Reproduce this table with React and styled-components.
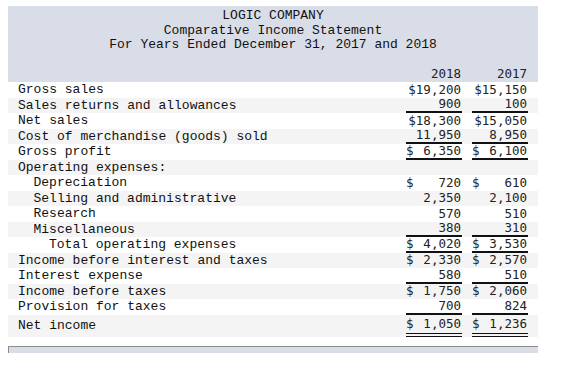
import React from "react";
import styled, { createGlobalStyle } from "styled-components";

const Global = createGlobalStyle`
  body {
    margin: 0;
    padding: 6px 0 0 8px;
    background: #ffffff;
    color: #1a1a1a;
  }
`;

const Sheet = styled.div`
  width: 530px;
  display: flex;
  flex-direction: column;
`;

const Header = styled.div`
  background: #d9dde7;
  padding-top: 3px;
  height: 76px;
  box-sizing: border-box;
  display: flex;
  flex-direction: column;
`;

const TitleLine = styled.div`
  font-family: "Liberation Mono", monospace;
  font-size: 13px;
  line-height: 14.5px;
  text-align: center;
  color: #111;
`;

const Row = styled.div`
  display: flex;
  align-items: stretch;
  height: ${(p) => p.$h || 15.5}px;
  background: ${(p) => (p.$shade ? "#f4f4f4" : "transparent")};
  padding-right: 10px;
  gap: 10px;
  box-sizing: border-box;
`;

const YearRow = styled(Row)`
  margin-top: auto;
  height: 17px;
`;

const Label = styled.div`
  flex: 1;
  font-family: "Liberation Mono", monospace;
  font-size: 13px;
  line-height: 15px;
  display: flex;
  align-items: center;
  padding-left: ${(p) => 10 + (p.$indent || 0) * 15.5}px;
  white-space: pre;
  color: #111;
`;

const Num = styled.div`
  width: 56px;
  box-sizing: border-box;
  display: flex;
  align-items: center;
  justify-content: ${(p) => (p.$dollar ? "space-between" : "flex-end")};
  padding-right: 1px;
  font-family: "DejaVu Sans Mono", monospace;
  font-size: 12.5px;
  line-height: 14px;
  color: #222;
  white-space: pre;
  border-bottom: ${(p) =>
    p.$line === "double"
      ? "4px double #111"
      : p.$line
      ? "2px solid #111"
      : "none"};
`;

const Spacer = styled.div`
  height: ${(p) => p.$h}px;
`;

const FootBar = styled.div`
  height: 6px;
  background: #d9dde7;
  border-top: 1px solid #8c8c8c;
  border-left: 1px solid #8c8c8c;
`;

const rows = [
  { label: "Gross sales", a: "$19,200", b: "$15,150" },
  { label: "Sales returns and allowances", a: "900", b: "100", line: true },
  { label: "Net sales", a: "$18,300", b: "$15,050" },
  { label: "Cost of merchandise (goods) sold", a: "11,950", b: "8,950", line: true },
  { label: "Gross profit", a: "$ 6,350", b: "$ 6,100", line: true },
  { label: "Operating expenses:", a: "", b: "" },
  { label: "Depreciation", indent: 1, a: "$ 720", b: "$ 610" },
  { label: "Selling and administrative", indent: 1, a: "2,350", b: "2,100" },
  { label: "Research", indent: 1, a: "570", b: "510" },
  { label: "Miscellaneous", indent: 1, a: "380", b: "310", line: true },
  { label: "Total operating expenses", indent: 2, a: "$ 4,020", b: "$ 3,530", line: true },
  { label: "Income before interest and taxes", a: "$ 2,330", b: "$ 2,570" },
  { label: "Interest expense", a: "580", b: "510", line: true },
  { label: "Income before taxes", a: "$ 1,750", b: "$ 2,060" },
  { label: "Provision for taxes", a: "700", b: "824", line: true },
  { label: "Net income", a: "$ 1,050", b: "$ 1,236", line: "double", h: 22 },
];

function Amount({ value, line }) {
  if (value.startsWith("$ ")) {
    return (
      <Num $dollar $line={line}>
        <span>$</span>
        <span>{value.slice(1).trim()}</span>
      </Num>
    );
  }
  return <Num $line={line}>{value}</Num>;
}

export default function App() {
  return (
    <>
      <Global />
      <Sheet>
        <Header>
          <TitleLine>LOGIC COMPANY</TitleLine>
          <TitleLine>Comparative Income Statement</TitleLine>
          <TitleLine>For Years Ended December 31, 2017 and 2018</TitleLine>
          <YearRow>
            <Label />
            <Num>2018</Num>
            <Num>2017</Num>
          </YearRow>
        </Header>
        {rows.map((r, i) => (
          <Row key={i} $shade={i % 2 === 1} $h={r.h}>
            <Label $indent={r.indent}>{r.label}</Label>
            <Amount value={r.a} line={r.line} />
            <Amount value={r.b} line={r.line} />
          </Row>
        ))}
        <Spacer $h={9} />
        <FootBar />
      </Sheet>
    </>
  );
}
